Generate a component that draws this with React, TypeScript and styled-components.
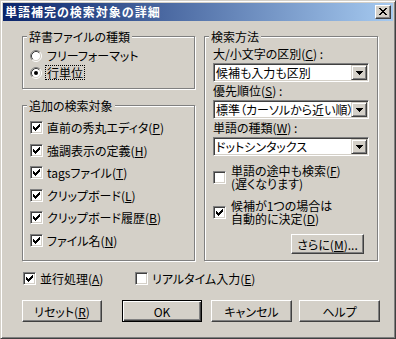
import React from 'react';
import styled, { createGlobalStyle, css } from 'styled-components';

const FACE = '#d4d0c8';

const GlobalStyle = createGlobalStyle`
  html, body {
    margin: 0;
    padding: 0;
    background: ${FACE};
  }
  body {
    font-family: "Noto Sans CJK JP", "Noto Sans", sans-serif;
    font-size: 12px;
    color: #000;
    font-feature-settings: "palt";
  }
`;

// Window frame and title bar
const Window = styled.div`
  box-sizing: border-box;
  width: 396px;
  height: 339px;
  padding: 2px;
  border: 1px solid;
  border-color: ${FACE} #404040 #404040 ${FACE};
  box-shadow: inset 1px 1px #fff, inset -1px -1px #808080;
  background: ${FACE};
  display: flex;
  flex-direction: column;
`;

const TitleBar = styled.div`
  height: 18px;
  flex: none;
  display: flex;
  align-items: center;
  padding: 0 2px;
  background: linear-gradient(to right, #0a246a, #a6caf0);
`;

const TitleText = styled.div`
  color: #fff;
  font-weight: bold;
  line-height: 14px;
  letter-spacing: 1px;
  white-space: nowrap;
`;

const CloseButton = styled.div`
  margin-left: auto;
  box-sizing: border-box;
  width: 16px;
  height: 14px;
  padding: 0 1px 1px 0;
  background: ${FACE};
  border: 1px solid;
  border-color: #fff #404040 #404040 #fff;
  box-shadow: inset -1px -1px #808080;
  display: flex;
  align-items: center;
  justify-content: center;
`;

const Content = styled.div`
  padding: 15px 0 0 19px;
`;

const Columns = styled.div`
  display: grid;
  grid-template-columns: 173px 174px;
  column-gap: 9px;
  align-items: start;
`;

const LeftColumn = styled.div`
  display: flex;
  flex-direction: column;
  gap: 16px;
`;

// Etched group box
const GroupBox = styled.div<{ $height: number; $pad: string; $gap?: number }>`
  position: relative;
  box-sizing: border-box;
  height: ${p => p.$height}px;
  border: 1px solid #808080;
  box-shadow: inset 1px 1px #fff, 1px 1px #fff;
  padding: ${p => p.$pad};
  display: flex;
  flex-direction: column;
  gap: ${p => p.$gap ?? 0}px;
`;

const GroupTitle = styled.span`
  position: absolute;
  top: -7px;
  left: 4px;
  padding: 0 2px;
  line-height: 13px;
  background: ${FACE};
  white-space: nowrap;
`;

// Options (radio / checkbox rows)
const OptionRow = styled.div<{ $gap: number; $width?: number }>`
  display: flex;
  align-items: center;
  gap: ${p => p.$gap}px;
  ${p => p.$width && css`width: ${p.$width}px; flex: none;`}
`;

const OptionText = styled.span<{ $focus?: boolean }>`
  padding: 0 1px;
  line-height: 13px;
  border: 1px ${p => (p.$focus ? 'dotted #000' : 'solid transparent')};
  white-space: nowrap;
`;

const Key = styled.span`
  text-decoration: underline;
  text-underline-offset: 1px;
`;

const CheckBoxBox = styled.span`
  box-sizing: border-box;
  width: 13px;
  height: 13px;
  flex: none;
  border: 1px solid;
  border-color: #808080 #fff #fff #808080;
  box-shadow: inset 1px 1px #404040, inset -1px -1px ${FACE};
  background: #fff;
  display: flex;
  align-items: center;
  justify-content: center;
`;

const RadioBox = styled.span`
  width: 13px;
  height: 12px;
  flex: none;
  display: flex;
`;

// Combo boxes
const FieldLabel = styled.div`
  line-height: 14px;
  white-space: nowrap;
`;

const Field = styled.div`
  display: flex;
  flex-direction: column;
`;

const FieldStack = styled.div`
  display: flex;
  flex-direction: column;
  gap: 2px;
`;

const Combo = styled.div`
  box-sizing: border-box;
  height: 19px;
  margin-top: 2px;
  padding: 1px;
  border: 1px solid;
  border-color: #808080 #fff #fff #808080;
  box-shadow: inset 1px 1px #404040, inset -1px -1px ${FACE};
  background: #fff;
  display: flex;
`;

const ComboText = styled.div`
  flex: 1;
  min-width: 0;
  overflow: hidden;
  white-space: nowrap;
  line-height: 15px;
  padding-left: 1px;
`;

const DropButton = styled.div`
  box-sizing: border-box;
  width: 16px;
  flex: none;
  background: ${FACE};
  border: 1px solid;
  border-color: ${FACE} #404040 #404040 ${FACE};
  box-shadow: inset 1px 1px #fff, inset -1px -1px #808080;
  display: flex;
  align-items: center;
  justify-content: center;
`;

const MethodOptions = styled.div`
  margin-top: 7px;
  display: flex;
  flex-direction: column;
  gap: 7px;
`;

// Push buttons
const PushButton = styled.div<{ $width: number; $height?: number; $offset?: number; $default?: boolean }>`
  box-sizing: border-box;
  width: ${p => p.$width}px;
  height: ${p => p.$height ?? 22}px;
  margin-left: ${p => p.$offset ?? 0}px;
  flex: none;
  background: ${FACE};
  line-height: 13px;
  white-space: nowrap;
  display: flex;
  align-items: center;
  justify-content: center;
  ${p =>
    p.$default
      ? css`
          border: 1px solid #000;
          box-shadow: inset 1px 1px #fff, inset -1px -1px #404040, inset -2px -2px #808080;
        `
      : css`
          border: 1px solid;
          border-color: #fff #404040 #404040 #fff;
          box-shadow: inset -1px -1px #808080;
        `}
`;

const MoreButton = styled(PushButton)`
  align-self: flex-end;
  margin-right: 5px;
  margin-top: 8px;
`;

const BottomOptions = styled.div`
  display: flex;
  align-items: center;
  margin-top: 10px;
  padding-left: 1px;
`;

const ButtonRow = styled.div`
  display: flex;
  margin-top: 14px;
`;

// Little bitmap-like drawings
const CheckMark = () => (
  <svg width="7" height="7" viewBox="0 0 7 7" shapeRendering="crispEdges">
    <path
      fill="#000"
      d="M6 0h1v1h-1z M5 1h2v1h-2z M0 2h1v1h-1z M4 2h3v1h-3z M0 3h2v1h-2z M3 3h3v1h-3z M0 4h5v1h-5z M1 5h3v1h-3z M2 6h1v1h-1z"
    />
  </svg>
);

const Check: React.FC<{ checked?: boolean }> = ({ checked }) => (
  <CheckBoxBox>{checked && <CheckMark />}</CheckBoxBox>
);

const Radio: React.FC<{ checked?: boolean }> = ({ checked }) => (
  <RadioBox>
    <svg width="12" height="12" viewBox="0 0 12 12">
      <circle cx="6" cy="6" r="4.5" fill="#fff" />
      <path d="M2.11 9.89 A5.5 5.5 0 0 1 9.89 2.11" fill="none" stroke="#808080" />
      <path d="M9.89 2.11 A5.5 5.5 0 0 1 2.11 9.89" fill="none" stroke="#fff" />
      <path d="M2.82 9.18 A4.5 4.5 0 0 1 9.18 2.82" fill="none" stroke="#404040" />
      <path d="M9.18 2.82 A4.5 4.5 0 0 1 2.82 9.18" fill="none" stroke={FACE} />
      {checked && <circle cx="6" cy="6" r="2" fill="#000" />}
    </svg>
  </RadioBox>
);

const CloseGlyph = () => (
  <svg width="8" height="7" viewBox="0 0 8 7" shapeRendering="crispEdges">
    <path
      fill="#000"
      d="M0 0h2v1h-2z M6 0h2v1h-2z M1 1h2v1h-2z M5 1h2v1h-2z M2 2h4v1h-4z M3 3h2v1h-2z M2 4h4v1h-4z M1 5h2v1h-2z M5 5h2v1h-2z M0 6h2v1h-2z M6 6h2v1h-2z"
    />
  </svg>
);

const DropArrow = () => (
  <svg width="7" height="4" viewBox="0 0 7 4" shapeRendering="crispEdges">
    <path fill="#000" d="M0 0h7v1h-7z M1 1h5v1h-5z M2 2h3v1h-3z M3 3h1v1h-1z" />
  </svg>
);

const ComboBox: React.FC<{ value: string }> = ({ value }) => (
  <Combo>
    <ComboText>{value}</ComboText>
    <DropButton>
      <DropArrow />
    </DropButton>
  </Combo>
);

const extraTargets = [
  { text: '直前の秀丸エディタ', key: 'P' },
  { text: '強調表示の定義', key: 'H' },
  { text: 'tagsファイル', key: 'T' },
  { text: 'クリップボード', key: 'L' },
  { text: 'クリップボード履歴', key: 'B' },
  { text: 'ファイル名', key: 'N' },
];

const App: React.FC = () => {
  return (
    <>
      <GlobalStyle />
      <Window>
        <TitleBar>
          <TitleText>単語補完の検索対象の詳細</TitleText>
          <CloseButton>
            <CloseGlyph />
          </CloseButton>
        </TitleBar>

        <Content>
          <Columns>
            <LeftColumn>
              <GroupBox $height={53} $pad="11px 0 0 7px" $gap={2}>
                <GroupTitle>辞書ファイルの種類</GroupTitle>
                <OptionRow $gap={2}>
                  <Radio />
                  <OptionText>フリーフォーマット</OptionText>
                </OptionRow>
                <OptionRow $gap={2}>
                  <Radio checked />
                  <OptionText $focus>行単位</OptionText>
                </OptionRow>
              </GroupBox>

              <GroupBox $height={156} $pad="14px 0 0 7px" $gap={7.5}>
                <GroupTitle>追加の検索対象</GroupTitle>
                {extraTargets.map(item => (
                  <OptionRow $gap={2} key={item.key}>
                    <Check checked />
                    <OptionText>
                      {item.text}(<Key>{item.key}</Key>)
                    </OptionText>
                  </OptionRow>
                ))}
              </GroupBox>
            </LeftColumn>

            <GroupBox $height={225} $pad="10px 8px 0 8px">
              <GroupTitle>検索方法</GroupTitle>
              <FieldStack>
                <Field>
                  <FieldLabel>
                    大/小文字の区別(<Key>C</Key>) :
                  </FieldLabel>
                  <ComboBox value="候補も入力も区別" />
                </Field>
                <Field>
                  <FieldLabel>
                    優先順位(<Key>S</Key>) :
                  </FieldLabel>
                  <ComboBox value="標準（カーソルから近い順）" />
                </Field>
                <Field>
                  <FieldLabel>
                    単語の種類(<Key>W</Key>) :
                  </FieldLabel>
                  <ComboBox value="ドットシンタックス" />
                </Field>
              </FieldStack>

              <MethodOptions>
                <OptionRow $gap={3}>
                  <Check />
                  <OptionText>
                    単語の途中も検索(<Key>F</Key>)
                    <br />
                    (遅くなります)
                  </OptionText>
                </OptionRow>
                <OptionRow $gap={3}>
                  <Check checked />
                  <OptionText>
                    候補が1つの場合は
                    <br />
                    自動的に決定(<Key>D</Key>)
                  </OptionText>
                </OptionRow>
              </MethodOptions>

              <MoreButton $width={73} $height={20}>
                さらに(<Key>M</Key>)...
              </MoreButton>
            </GroupBox>
          </Columns>

          <BottomOptions>
            <OptionRow $gap={2} $width={112}>
              <Check checked />
              <OptionText>
                並行処理(<Key>A</Key>)
              </OptionText>
            </OptionRow>
            <OptionRow $gap={2}>
              <Check />
              <OptionText>
                リアルタイム入力(<Key>E</Key>)
              </OptionText>
            </OptionRow>
          </BottomOptions>

          <ButtonRow>
            <PushButton $width={80}>
              リセット(<Key>R</Key>)
            </PushButton>
            <PushButton $width={80} $offset={20} $default>
              OK
            </PushButton>
            <PushButton $width={81} $offset={9}>
              キャンセル
            </PushButton>
            <PushButton $width={81} $offset={7}>
              ヘルプ
            </PushButton>
          </ButtonRow>
        </Content>
      </Window>
    </>
  );
};

export default App;
